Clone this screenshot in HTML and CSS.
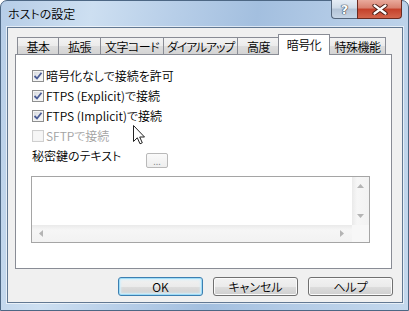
FILE: index.html
```html
<!DOCTYPE html>
<html lang="ja">
  <head>
    <meta charset="utf-8">
    <title>ホストの設定</title>
    <link rel="stylesheet" href="styles.css">
  </head>
  <body>

    <div class="window">
      <div class="titlebar">
        <span class="title">ホストの設定</span>
        <div class="caption">
          <span class="cap-help">?</span>
          <span class="cap-close">
            <svg width="16" height="11" viewBox="0 0 16 11">
              <path d="M2.5 1.5 L13.5 9.5 M13.5 1.5 L2.5 9.5" stroke="#4a1c14" stroke-width="4.2" stroke-linecap="round"/>
              <path d="M2.5 1.5 L13.5 9.5 M13.5 1.5 L2.5 9.5" stroke="#fff" stroke-width="2.2" stroke-linecap="round"/>
            </svg>
          </span>
        </div>
      </div>

      <div class="client">
        <div class="tabs">
          <span class="tab t-basic">基本</span>
          <span class="tab t-ext">拡張</span>
          <span class="tab t-code">文字コード</span>
          <span class="tab t-dial">ダイアルアップ</span>
          <span class="tab t-adv">高度</span>
          <span class="tab t-enc active">暗号化</span>
          <span class="tab t-spec">特殊機能</span>
        </div>

        <section class="panel">
          <label class="check">
            <span class="box"><svg width="10" height="10" viewBox="0 0 10 10"><path d="M1.5 5 L4 7.5 L8.5 1.8" fill="none" stroke="#4b5d96" stroke-width="1.8"/></svg></span>
            暗号化なしで接続を許可
          </label>
          <label class="check">
            <span class="box"><svg width="10" height="10" viewBox="0 0 10 10"><path d="M1.5 5 L4 7.5 L8.5 1.8" fill="none" stroke="#4b5d96" stroke-width="1.8"/></svg></span>
            FTPS (Explicit)で接続
          </label>
          <label class="check">
            <span class="box"><svg width="10" height="10" viewBox="0 0 10 10"><path d="M1.5 5 L4 7.5 L8.5 1.8" fill="none" stroke="#4b5d96" stroke-width="1.8"/></svg></span>
            FTPS (Implicit)で接続
          </label>
          <label class="check disabled">
            <span class="box"></span>
            SFTPで接続
          </label>
          <div class="keyrow">
            <span class="key-label">秘密鍵のテキスト</span>
            <span class="dots">...</span>
          </div>

          <div class="textbox">
            <div class="tb-text"></div>
            <div class="vscroll">
              <svg width="7" height="4" viewBox="0 0 7 4"><path d="M0 4 L3.5 0 L7 4 Z" fill="#b4b4b4"/></svg>
              <svg width="7" height="4" viewBox="0 0 7 4"><path d="M0 0 L3.5 4 L7 0 Z" fill="#b4b4b4"/></svg>
            </div>
            <div class="hscroll">
              <svg width="4" height="7" viewBox="0 0 4 7"><path d="M4 0 L0 3.5 L4 7 Z" fill="#b4b4b4"/></svg>
              <svg width="4" height="7" viewBox="0 0 4 7"><path d="M0 0 L4 3.5 L0 7 Z" fill="#b4b4b4"/></svg>
            </div>
            <div class="corner"></div>
          </div>
        </section>

        <div class="buttons">
          <button class="btn default">OK</button>
          <button class="btn">キャンセル</button>
          <button class="btn">ヘルプ</button>
        </div>
      </div>

      <svg class="cursor" width="13" height="20" viewBox="0 0 13 20">
        <path d="M0.5 0.5 L0.5 16.5 L4.3 12.8 L7 18.8 L9.3 17.8 L6.7 12 L11.5 12 Z" fill="#fff" stroke="#222" stroke-width="1" stroke-linejoin="round"/>
      </svg>
    </div>

  </body>
</html>
```

FILE: styles.css
```css
* { box-sizing: border-box; }

body {
  margin: 0;
  background-color: #fff;
  font-family: 'Noto Sans CJK JP', sans-serif;
  font-size: 12px;
  font-weight: 350;
  font-feature-settings: "palt";
  color: #000;
}

/* window frame */

.window {
  position: relative;
  width: 409px;
  height: 311px;
  border: 1px solid #4d6784;
  border-radius: 7px 7px 0 0;
  padding: 0 5px 7px 6px;
  background: linear-gradient(100deg, #b6cde7 0%, #cddff1 20%, #b7cee8 38%, #a3bfdf 56%, #b3cbe6 74%, #c4d8ed 100%);
}

.titlebar {
  height: 26px;
  display: flex;
  justify-content: space-between;
  align-items: flex-start;
}

.title {
  margin: 6px 0 0 1px;
  line-height: 14px;
}

.caption {
  display: flex;
  margin: -1px 1px 0 0;
}

.cap-help, .cap-close {
  height: 19px;
  display: flex;
  align-items: center;
  justify-content: center;
  border: 1px solid #54657b;
  border-top: none;
}

.cap-help {
  width: 26px;
  border-right: none;
  border-radius: 0 0 0 4px;
  background: linear-gradient(#e6edf5 0%, #cfdbe8 45%, #b3c3d6 50%, #c6d5e6 100%);
  color: #fff;
  font-family: 'DejaVu Sans', sans-serif;
  font-weight: bold;
  font-size: 13px;
  text-shadow: 0 0 1px #303a48, 0 0 1px #303a48, 0 0 1px #303a48;
}

.cap-close {
  width: 45px;
  border-color: #6a2a20;
  border-radius: 0 0 4px 0;
  background: linear-gradient(#e9aa9c 0%, #d8806f 45%, #c4402a 50%, #d3664d 100%);
}

.client {
  height: 276px;
  border: 1px solid #627892;
  box-shadow: 0 0 0 1px rgba(255, 255, 255, 0.6);
  background-color: #f0f0f0;
  padding: 7px 10px 6px 7px;
}

/* tabs */

.tabs {
  display: flex;
  align-items: flex-end;
  height: 19px;
  padding-left: 2px;
}

.tab {
  height: 17px;
  margin-left: -1px;
  display: flex;
  align-items: center;
  justify-content: center;
  border: 1px solid #898c95;
  border-bottom: none;
  background: linear-gradient(#f3f3f3 0%, #ebebeb 50%, #dddddd 51%, #d4d4d4 100%);
  white-space: nowrap;
  letter-spacing: -0.5px;
}

.tab:first-child { margin-left: 0; }

.t-basic { width: 42px; }
.t-ext { width: 43px; }
.t-code { width: 64px; }
.t-dial { width: 75px; }
.t-adv { width: 43px; }
.t-enc { width: 52px; }
.t-spec { width: 57px; }

.t-dial { letter-spacing: -1.2px; }

.tab.active {
  position: relative;
  z-index: 1;
  height: 21px;
  margin: 0 0 -1px -2px;
  padding-bottom: 2px;
  background: #fff;
}

.panel {
  height: 215px;
  border: 1px solid #898c95;
  background-color: #fff;
  padding: 11px 0 0 15px;
}

/* checkboxes */

.check {
  display: flex;
  align-items: center;
  height: 20px;
  padding-left: 1px;
  line-height: 14px;
}

.box {
  width: 12px;
  height: 12px;
  margin-right: 2px;
  display: flex;
  align-items: center;
  justify-content: center;
  border: 1px solid #8e8f8f;
  background: linear-gradient(135deg, #d2d5da 0%, #eef0f2 60%, #fafafa 100%);
  box-shadow: inset 0 0 0 1px #f4f4f4;
}

.check.disabled { color: #a3a3a3; }

.check.disabled .box {
  border-color: #cfcfcf;
  background: #f6f6f6;
}

.keyrow {
  display: flex;
  height: 20px;
  padding-left: 1px;
}

.key-label {
  width: 114px;
  line-height: 20px;
}

.dots {
  width: 22px;
  height: 15px;
  margin-top: 7px;
  border: 1px solid #b9b9b9;
  border-radius: 2px;
  background: linear-gradient(#fafafa, #eeeeee);
  color: #8a8a8a;
  font-size: 9px;
  line-height: 15px;
  text-align: center;
}

/* multi-line text box */

.textbox {
  width: 339px;
  height: 67px;
  margin-top: 10px;
  border: 1px solid #a5a5a5;
  display: grid;
  grid-template-columns: 1fr 17px;
  grid-template-rows: 1fr 17px;
}

.tb-text { background-color: #fff; }

.vscroll {
  display: flex;
  flex-direction: column;
  justify-content: space-between;
  align-items: center;
  padding: 7px 0 7px;
  background: linear-gradient(90deg, #eaeaea, #f6f6f6 30%, #f2f2f2);
}

.hscroll {
  display: flex;
  justify-content: space-between;
  align-items: center;
  padding: 0 8px 0 7px;
  background: linear-gradient(#eaeaea, #f6f6f6 30%, #f2f2f2);
}

.corner { background-color: #f7f7f7; }

/* dialog buttons */

.buttons {
  display: flex;
  justify-content: flex-end;
  gap: 10px;
  margin: 8px -1px 0 0;
}

.btn {
  width: 85px;
  height: 19px;
  padding: 0;
  border: 1px solid #707070;
  border-radius: 3px;
  background: linear-gradient(#f2f2f2 0%, #ebebeb 50%, #dddddd 51%, #cfcfcf 100%);
  box-shadow: inset 0 0 0 1px #fbfbfb;
  font-family: 'Noto Sans CJK JP', sans-serif;
  font-size: 12px;
  font-weight: 350;
  font-feature-settings: "palt";
  color: #000;
}

.btn.default {
  border-color: #3c7fb1;
  box-shadow: inset 0 0 0 1px #9fdcf7, inset 0 0 2px 2px #d4effb;
}

.cursor {
  position: absolute;
  left: 132px;
  top: 124px;
}
```
